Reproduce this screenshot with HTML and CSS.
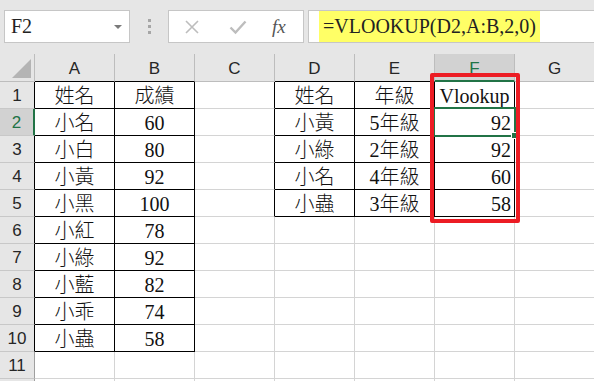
FILE: index.html
```html
<!DOCTYPE html>
<html lang="zh-Hant">
<head>
<meta charset="UTF-8">
<title>VLOOKUP</title>
<link rel="stylesheet" href="styles.css">
</head>
<body>
  <div class="toolbar">
    <div class="namebox">F2<span class="drop"></span></div>
    <div class="dots"><i></i><i></i><i></i></div>
    <div class="fxbox">
      <svg class="ico" width="16" height="16" viewBox="0 0 16 16"><path d="M2 2L14 14M14 2L2 14" stroke="#bdbdbd" stroke-width="1.6" fill="none"/></svg>
      <svg class="ico" width="18" height="16" viewBox="0 0 18 16"><path d="M1.5 8.5L6.5 13.5L16.5 2.5" stroke="#bdbdbd" stroke-width="2.4" fill="none"/></svg>
      <span class="fx">fx</span>
    </div>
    <div class="formula"><span class="hl">=VLOOKUP(D2,A:B,2,0)</span></div>
  </div>

  <div class="sheet">
    <div class="grid">
      <div class="corner"><span class="tri"></span></div>
      <div class="ch bk">A</div>
      <div class="ch bk">B</div>
      <div class="ch">C</div>
      <div class="ch bk">D</div>
      <div class="ch bk">E</div>
      <div class="ch sel">F</div>
      <div class="ch">G</div>

      <div class="rh bk">1</div>
      <div class="c t">姓名</div><div class="c t">成績</div><div class="c tl"></div>
      <div class="c t">姓名</div><div class="c t">年級</div><div class="c t">Vlookup</div><div class="c"></div>

      <div class="rh sel">2</div>
      <div class="c t">小名</div><div class="c t">60</div><div class="c tl"></div>
      <div class="c t">小黃</div><div class="c t">5年級</div><div class="c t num">92</div><div class="c"></div>

      <div class="rh bk">3</div>
      <div class="c t">小白</div><div class="c t">80</div><div class="c tl"></div>
      <div class="c t">小綠</div><div class="c t">2年級</div><div class="c t num">92</div><div class="c"></div>

      <div class="rh bk">4</div>
      <div class="c t">小黃</div><div class="c t">92</div><div class="c tl"></div>
      <div class="c t">小名</div><div class="c t">4年級</div><div class="c t num">60</div><div class="c"></div>

      <div class="rh bk">5</div>
      <div class="c t">小黑</div><div class="c t">100</div><div class="c tl"></div>
      <div class="c t">小蟲</div><div class="c t">3年級</div><div class="c t num">58</div><div class="c"></div>

      <div class="rh bk">6</div>
      <div class="c t">小紅</div><div class="c t">78</div><div class="c"></div>
      <div class="c"></div><div class="c"></div><div class="c"></div><div class="c"></div>

      <div class="rh bk">7</div>
      <div class="c t">小綠</div><div class="c t">92</div><div class="c"></div>
      <div class="c"></div><div class="c"></div><div class="c"></div><div class="c"></div>

      <div class="rh bk">8</div>
      <div class="c t">小藍</div><div class="c t">82</div><div class="c"></div>
      <div class="c"></div><div class="c"></div><div class="c"></div><div class="c"></div>

      <div class="rh bk">9</div>
      <div class="c t">小乖</div><div class="c t">74</div><div class="c"></div>
      <div class="c"></div><div class="c"></div><div class="c"></div><div class="c"></div>

      <div class="rh bk">10</div>
      <div class="c t">小蟲</div><div class="c t">58</div><div class="c"></div>
      <div class="c"></div><div class="c"></div><div class="c"></div><div class="c"></div>

      <div class="rh">11</div>
      <div class="c"></div><div class="c"></div><div class="c"></div>
      <div class="c"></div><div class="c"></div><div class="c"></div><div class="c"></div>

      <div class="rh"></div>
      <div class="c"></div><div class="c"></div><div class="c"></div>
      <div class="c"></div><div class="c"></div><div class="c"></div><div class="c"></div>
    </div>
    <div class="cursor"><span class="handle"></span></div>
    <div class="mark"></div>
  </div>
</body>
</html>
```

FILE: styles.css
```css
body {
  margin: 0;
  background: #e6e6e6;
  overflow: hidden;
  font-family: 'Liberation Serif', 'Noto Sans CJK TC', serif;
  color: #000;
}
.toolbar {
  height: 54px;
  display: flex;
  align-items: flex-start;
  padding-top: 10px;
  box-sizing: border-box;
}
.namebox {
  position: relative;
  margin-left: 4px;
  width: 126px;
  height: 33px;
  box-sizing: border-box;
  border: 1px solid #c6c6c6;
  background: #fff;
  font-size: 20px;
  line-height: 31px;
  padding-left: 6px;
  color: #222;
}
.drop {
  position: absolute;
  right: 7px;
  top: 14px;
  border-left: 4px solid transparent;
  border-right: 4px solid transparent;
  border-top: 4px solid #7a7a7a;
}
.dots {
  width: 38px;
  height: 33px;
  display: flex;
  flex-direction: column;
  align-items: center;
  justify-content: center;
  gap: 3px;
}
.dots i {
  display: block;
  width: 3px;
  height: 3px;
  background: #a6a6a6;
}
.fxbox {
  width: 136px;
  height: 33px;
  box-sizing: border-box;
  border: 1px solid #c6c6c6;
  background: #fff;
  display: flex;
  align-items: center;
  padding-left: 15px;
  gap: 29px;
}
.ico {
  display: block;
}
.fx {
  font-family: 'Liberation Serif', serif;
  font-style: italic;
  font-size: 19px;
  color: #555;
  margin-left: -4px;
}
.formula {
  flex: 1;
  height: 33px;
  margin-left: 4px;
  margin-right: -10px;
  box-sizing: border-box;
  border: 1px solid #c6c6c6;
  border-right: none;
  background: #fff;
  padding-left: 10px;
}
.hl {
  display: inline-block;
  height: 31px;
  line-height: 31px;
  background: #ffff66;
  padding: 0 4px 0 4px;
  font-size: 20px;
  color: #222;
}

.sheet {
  position: relative;
}
.grid {
  display: grid;
  grid-template-columns: 35px repeat(7, 80px);
  grid-template-rows: 28px;
  grid-auto-rows: 27px;
  background: #fff;
}
.grid > div {
  box-sizing: border-box;
  border-right: 1px solid #d4d4d4;
  border-bottom: 1px solid #d4d4d4;
}
.corner {
  position: relative;
  background: #e6e6e6;
  border-color: #bdbdbd !important;
}
.tri {
  position: absolute;
  right: 3px;
  bottom: 3px;
  border-left: 19px solid transparent;
  border-bottom: 19px solid #b4b4b4;
}
.grid > .ch {
  background: #e6e6e6;
  border-right-color: #bdbdbd;
  border-bottom-color: #bdbdbd;
  text-align: center;
  font-family: 'Liberation Sans', sans-serif;
  font-size: 17px;
  line-height: 29px;
  color: #262626;
}
.grid > .ch.bk {
  border-bottom-color: #000;
}
.grid > .ch.sel {
  background: #d2d2d2;
  color: #217346;
  border-bottom: 2px solid #217346;
}
.grid > .rh {
  background: #e6e6e6;
  border-right-color: #9f9f9f;
  border-bottom-color: #c8c8c8;
  text-align: center;
  font-family: 'Liberation Sans', sans-serif;
  font-size: 17px;
  line-height: 28px;
  color: #262626;
}
.grid > .rh.bk {
  border-right-color: #000;
}
.grid > .rh.sel {
  background: #d2d2d2;
  color: #217346;
  border-right: 2px solid #217346;
}
.c {
  text-align: center;
  font-size: 20px;
  line-height: 28px;
  font-weight: 300;
  color: #111;
}
.grid > .t {
  border-right-color: #000;
  border-bottom-color: #000;
}
.grid > .tl {
  border-right-color: #000;
}
.num {
  text-align: right;
  padding-right: 3px;
}

.cursor {
  position: absolute;
  left: 433px;
  top: 53px;
  width: 83px;
  height: 30px;
  box-sizing: border-box;
  border: 2px solid #217346;
}
.handle {
  position: absolute;
  right: -4px;
  bottom: -4px;
  width: 5px;
  height: 5px;
  background: #217346;
  border: 1px solid #fff;
}
.mark {
  position: absolute;
  left: 430px;
  top: 19px;
  width: 90px;
  height: 150px;
  box-sizing: border-box;
  border: 4px solid #ec1c24;
  border-radius: 2px;
}
```
